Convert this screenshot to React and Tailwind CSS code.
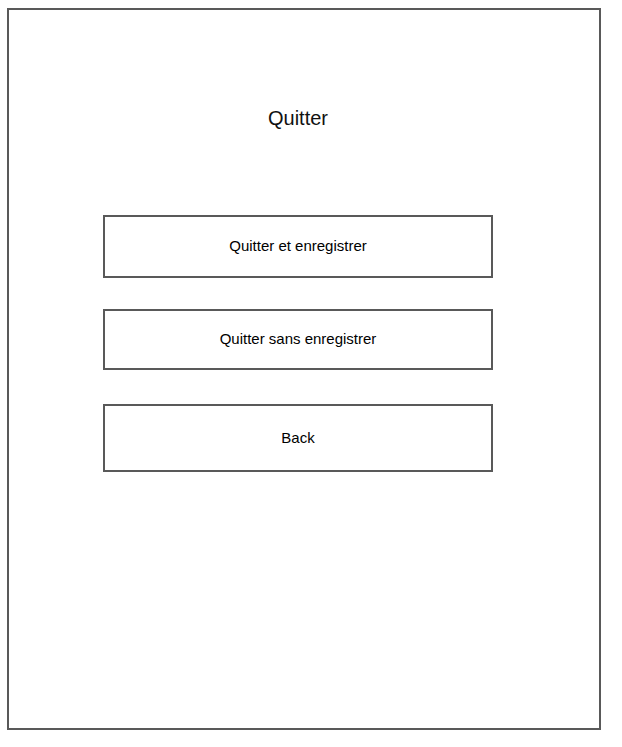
export default function App() {
  const buttons = [
    { label: 'Quitter et enregistrer', h: 'h-[63px]', mt: 'mt-[85px]' },
    { label: 'Quitter sans enregistrer', h: 'h-[61px]', mt: 'mt-[31px]' },
    { label: 'Back', h: 'h-[68px]', mt: 'mt-[34px]' },
  ];

  return (
    <div className="w-[622px] h-[747px] bg-white pl-[7px] pt-[8px] font-['Liberation_Sans',Arial,sans-serif] text-black">
      <div className="w-[594px] h-[722px] border-2 border-[#595959] pl-[94px] pt-[96px]">
        <div className="w-[390px] flex flex-col">
          <h1 className="text-[20px] leading-[24px] text-center text-[#111]">Quitter</h1>
          {buttons.map((b) => (
            <button
              key={b.label}
              className={`${b.h} ${b.mt} w-full border-2 border-[#595959] bg-white text-[15px] flex items-center justify-center`}
            >
              {b.label}
            </button>
          ))}
        </div>
      </div>
    </div>
  );
}
